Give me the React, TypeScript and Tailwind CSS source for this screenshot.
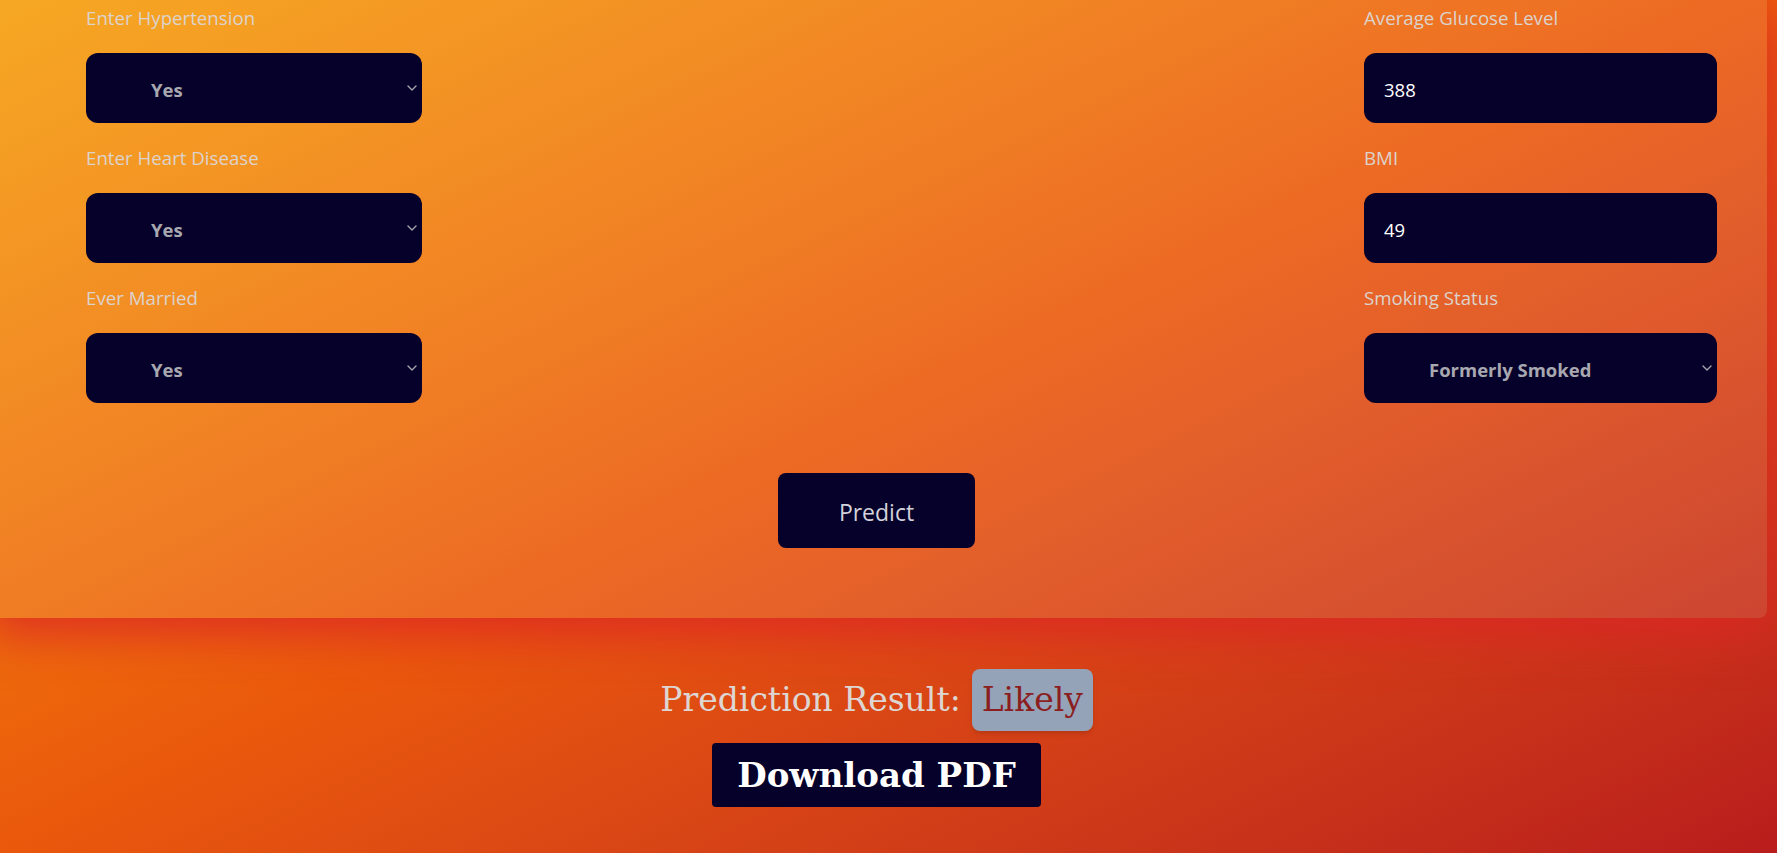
import { useState } from "react";

const leftFields = [
  { label: "Enter Hypertension", value: "Yes" },
  { label: "Enter Heart Disease", value: "Yes" },
  { label: "Ever Married", value: "Yes" },
];

const Chevron = () => (
  <svg
    width="10"
    height="6"
    viewBox="0 0 10 6"
    className="pointer-events-none absolute right-[5px] top-1/2 -translate-y-1/2"
  >
    <path d="M1 1l4 4 4-4" fill="none" stroke="#a4a4ad" strokeWidth="1.4" strokeLinecap="round" strokeLinejoin="round" />
  </svg>
);

const SelectBox = ({ value, options }: { value: string; options: string[] }) => {
  const [val, setVal] = useState(value);
  return (
    <div className="relative h-[70px] w-full">
      <select
        value={val}
        onChange={(e) => setVal(e.target.value)}
        className="h-full w-full appearance-none rounded-xl bg-[#06012a] pl-[65px] pt-[3px] text-[18.5px] font-bold text-[#a8a8b0] outline-none"
      >
        {options.map((o) => (
          <option key={o} value={o}>
            {o}
          </option>
        ))}
      </select>
      <Chevron />
    </div>
  );
};

const Field = ({ label, children }: { label: string; children: React.ReactNode }) => (
  <div className="mb-[23px]">
    <label className="mb-[23px] block text-[18.7px] leading-[24px] text-[#dcd3cc]">{label}</label>
    {children}
  </div>
);

export default function App() {
  return (
    <div
      className="min-h-screen overflow-hidden bg-gradient-to-br from-[#f59e0b] via-[#ea580c] to-[#b91c1c]"
      style={{ fontFamily: '"Open Sans", "Noto Sans", sans-serif' }}
    >
      {/* form card, scrolled so its top is out of view */}
      <div className="-ml-[14px] mr-[10px] rounded-b-lg bg-white/10 pb-[70px] pt-[6px] shadow-[0_15px_50px_rgba(220,38,38,0.9)]">
        <div className="flex justify-between pl-[100px] pr-[50px]">
          <div className="w-[336px]">
            {leftFields.map((f) => (
              <Field key={f.label} label={f.label}>
                <SelectBox value={f.value} options={["Yes", "No"]} />
              </Field>
            ))}
          </div>
          <div className="w-[353px]">
            <Field label="Average Glucose Level">
              <input
                type="text"
                defaultValue="388"
                className="h-[70px] w-full rounded-xl bg-[#06012a] pl-[20px] pt-[3px] text-[18.5px] text-white outline-none"
              />
            </Field>
            <Field label="BMI">
              <input
                type="text"
                defaultValue="49"
                className="h-[70px] w-full rounded-xl bg-[#06012a] pl-[20px] pt-[3px] text-[18.5px] text-white outline-none"
              />
            </Field>
            <Field label="Smoking Status">
              <SelectBox
                value="Formerly Smoked"
                options={["Never Smoked", "Formerly Smoked", "Smokes", "Unknown"]}
              />
            </Field>
          </div>
        </div>
        <div className="mt-[-23px] flex justify-center pt-[70px]">
          <button className="h-[75px] w-[197px] rounded-lg bg-[#06012a] pt-[3px] text-[23px] text-[#d2d2da]">
            Predict
          </button>
        </div>
      </div>

      {/* result */}
      <div
        className="-ml-[14px] mr-[10px] flex flex-col items-center pt-[51px]"
        style={{ fontFamily: '"DejaVu Serif", "Liberation Serif", serif' }}
      >
        <div className="flex items-center gap-[11px]">
          <span className="text-[33px] text-[#ddd6d2]">Prediction Result:</span>
          <span className="flex h-[62px] w-[121px] items-center justify-center rounded-lg bg-[#94a3b8] text-[33px] text-[#8b1e1e] shadow-md">
            Likely
          </span>
        </div>
        <button className="mt-[12px] flex h-[64px] w-[329px] items-center justify-center rounded-sm bg-[#06012a] text-[34px] font-bold text-white">
          Download PDF
        </button>
      </div>
    </div>
  );
}
